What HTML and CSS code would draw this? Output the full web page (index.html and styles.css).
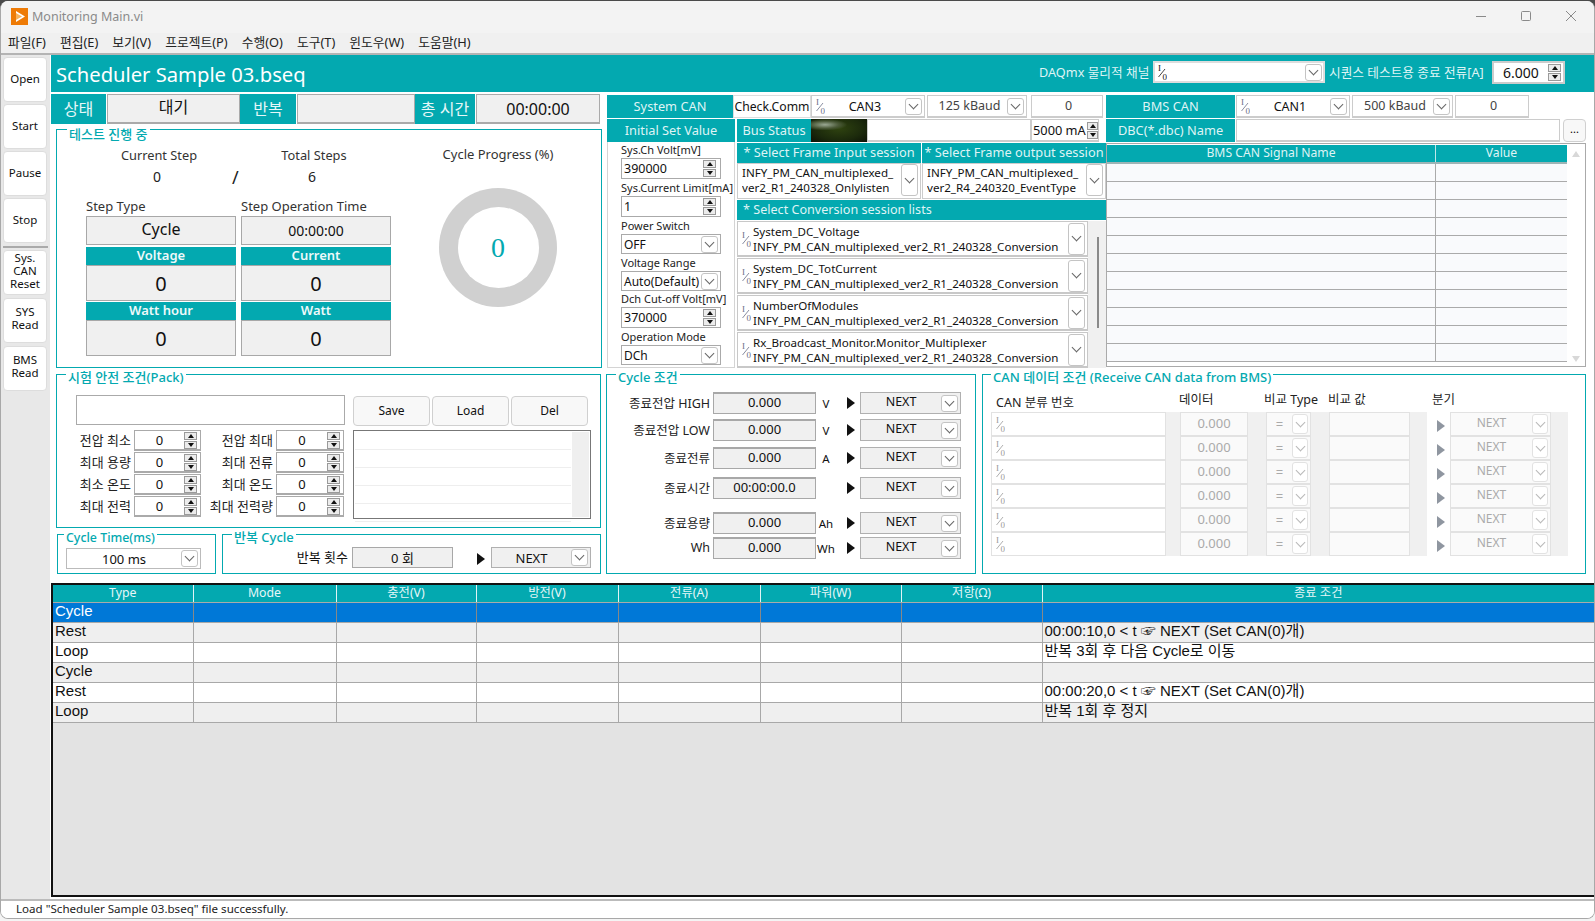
FILE: index.html
```html
<!DOCTYPE html>
<html lang="ko">
<head>
<meta charset="utf-8">
<title>Monitoring Main.vi</title>
<link rel="stylesheet" href="styles.css">
</head>
<body>
<svg class="defs" width="0" height="0" aria-hidden="true">
  <symbol id="io" viewBox="0 0 9 16">
    <text x="0" y="7" class="io-t">I</text>
    <line x1="0.5" y1="13" x2="7" y2="5" stroke="currentColor" stroke-width="0.8"/>
    <text x="4.5" y="15.5" class="io-t">0</text>
  </symbol>
</svg>
<div class="window">
  <div class="titlebar">
    <svg class="appicon" width="17" height="17" viewBox="0 0 17 17"><rect width="17" height="17" fill="#ee7b06"/><path d="M5 3 L14 8.5 L5 14 Z" fill="#fff"/><path d="M5 5 L11 8.5 L5 12 Z" fill="#f7b35e"/></svg>
    <span class="apptitle">Monitoring Main.vi</span>
    <div class="winbtns">
      <svg width="10" height="10" viewBox="0 0 10 10"><line x1="0" y1="5.5" x2="10" y2="5.5" stroke="#8a8a8a"/></svg>
      <svg width="10" height="10" viewBox="0 0 10 10"><rect x="0.5" y="0.5" width="9" height="9" rx="1" fill="none" stroke="#8a8a8a"/></svg>
      <svg width="10" height="10" viewBox="0 0 10 10"><path d="M0 0 L10 10 M10 0 L0 10" stroke="#8a8a8a"/></svg>
    </div>
  </div>
  <div class="menubar">
    <span>파일(F)</span><span>편집(E)</span><span>보기(V)</span><span>프로젝트(P)</span><span>수행(O)</span><span>도구(T)</span><span>윈도우(W)</span><span>도움말(H)</span>
  </div>
  <div class="main">
    <div class="toolbar">
      <div class="tgroup">
        <button class="tbtn">Open</button>
        <button class="tbtn">Start</button>
        <button class="tbtn">Pause</button>
        <button class="tbtn">Stop</button>
      </div>
      <div class="tsep"></div>
      <div class="tgroup tgroup2">
        <button class="tbtn tsmall">Sys.<br>CAN<br>Reset</button>
        <button class="tbtn tsmall">SYS<br>Read</button>
        <button class="tbtn tsmall">BMS<br>Read</button>
      </div>
    </div>
    <div class="content">
      <div class="header">
        <div class="apptext">Scheduler Sample 03.bseq</div>
        <div class="hlabel daqlabel">DAQmx 물리적 채널</div>
        <div class="ctl daq"><svg class="io dark"><use href="#io"/></svg><span class="grow"></span><span class="cb"></span></div>
        <div class="hlabel seqlabel">시퀀스 테스트용 종료 전류[A]</div>
        <div class="ctl seqval"><span class="grow center">6.000</span><span class="spin"><i></i><i></i></span></div>
      </div>
      <div class="upper">
        <div class="left">
          <div class="statusrow">
            <div class="slabel w55">상태</div>
            <div class="sfield w133 raised">대기</div>
            <div class="slabel w56">반복</div>
            <div class="sfield w118"></div>
            <div class="slabel w60">총 시간</div>
            <div class="sfield w124">00:00:00</div>
          </div>
          <div class="panel p-test">
            <span class="legend">테스트 진행 중</span>
            <div class="steps">
              <div class="triple t-head"><span>Current Step</span><span></span><span>Total Steps</span></div>
              <div class="triple t-val"><span>0</span><span class="slash">/</span><span>6</span></div>
              <div class="triple t-sub"><span>Step Type</span><span></span><span>Step Operation Time</span></div>
              <div class="triple t-box"><div class="vbox big">Cycle</div><span></span><div class="vbox">00:00:00</div></div>
              <div class="triple t-hdr"><div class="tealh">Voltage</div><span></span><div class="tealh">Current</div></div>
              <div class="triple t-num"><div class="vbox num">0</div><span></span><div class="vbox num">0</div></div>
              <div class="triple t-hdr"><div class="tealh">Watt hour</div><span></span><div class="tealh">Watt</div></div>
              <div class="triple t-num"><div class="vbox num">0</div><span></span><div class="vbox num">0</div></div>
            </div>
            <div class="progress">
              <div class="ptitle">Cycle Progress (%)</div>
              <div class="ring"><div class="ring-in">0</div></div>
            </div>
          </div>
          <div class="panel p-safe">
            <span class="legend">시험 안전 조건(Pack)</span>
            <div class="safegrid">
              <div class="nameinput"></div>
              <div class="safebtns"><button class="sbtn">Save</button><button class="sbtn">Load</button><button class="sbtn">Del</button></div>
              <div class="limits">
                <label>전압 최소</label><div class="ctl lim"><span class="grow center">0</span><span class="spin"><i></i><i></i></span></div>
                <label>전압 최대</label><div class="ctl lim"><span class="grow center">0</span><span class="spin"><i></i><i></i></span></div>
                <label>최대 용량</label><div class="ctl lim"><span class="grow center">0</span><span class="spin"><i></i><i></i></span></div>
                <label>최대 전류</label><div class="ctl lim"><span class="grow center">0</span><span class="spin"><i></i><i></i></span></div>
                <label>최소 온도</label><div class="ctl lim"><span class="grow center">0</span><span class="spin"><i></i><i></i></span></div>
                <label>최대 온도</label><div class="ctl lim"><span class="grow center">0</span><span class="spin"><i></i><i></i></span></div>
                <label>최대 전력</label><div class="ctl lim"><span class="grow center">0</span><span class="spin"><i></i><i></i></span></div>
                <label>최대 전력량</label><div class="ctl lim"><span class="grow center">0</span><span class="spin"><i></i><i></i></span></div>
              </div>
              <div class="listbox"><div class="listrows"><div></div><div></div><div></div><div></div><div></div></div><div class="listscroll"></div></div>
            </div>
          </div>
          <div class="bottomrow">
            <div class="panel p-time">
              <span class="legend">Cycle Time(ms)</span>
              <div class="ctl timesel"><span class="grow center">100 ms</span><span class="cb"></span></div>
            </div>
            <div class="panel p-rep">
              <span class="legend">반복 Cycle</span>
              <div class="replabel">반복 횟수</div>
              <div class="vbox repbox">0 회</div>
              <span class="play repplay"></span>
              <div class="ctl gray repnext"><span class="grow center">NEXT</span><span class="cb"></span></div>
            </div>
          </div>
        </div>
        <div class="right">
          <div class="cantop">
            <div class="cana">
              <div class="crow">
                <div class="tlabel w126">System CAN</div>
                <div class="plain w78">Check.Comm</div>
                <div class="ctl w114 thin"><svg class="io"><use href="#io"/></svg><span class="grow center">CAN3</span><span class="cb"></span></div>
                <div class="ctl w100 thin ml2"><span class="grow center soft">125 kBaud</span><span class="cb"></span></div>
                <div class="ctl w72 thin ml4"><span class="grow center soft">0</span></div>
              </div>
              <div class="crow mt1">
                <div class="tlabel w128">Initial Set Value</div>
                <div class="tlabel w74 ml2">Bus Status</div>
                <div class="led"></div>
                <div class="ctl w164 thin"></div>
                <div class="ctl w68 thin tight-ma"><span class="grow ma">5000 mA</span><span class="spin"><i></i><i></i></span></div>
              </div>
              <div class="canlow">
                <div class="settings">
                  <label class="slab">Sys.Ch Volt[mV]</label>
                  <div class="ctl sset"><span class="grow pl">390000</span><span class="spin"><i></i><i></i></span></div>
                  <label class="slab">Sys.Current Limit[mA]</label>
                  <div class="ctl sset"><span class="grow pl">1</span><span class="spin"><i></i><i></i></span></div>
                  <label class="slab">Power Switch</label>
                  <div class="ctl ssel"><span class="grow pl">OFF</span><span class="cb"></span></div>
                  <label class="slab">Voltage Range</label>
                  <div class="ctl ssel"><span class="grow pl">Auto(Default)</span><span class="cb"></span></div>
                  <label class="slab tight">Dch Cut-off Volt[mV]</label>
                  <div class="ctl sset"><span class="grow pl">370000</span><span class="spin"><i></i><i></i></span></div>
                  <label class="slab">Operation Mode</label>
                  <div class="ctl ssel"><span class="grow pl">DCh</span><span class="cb"></span></div>
                </div>
                <div class="sessions">
                  <div class="sessheads"><div class="tlabel">* Select Frame Input session</div><div class="tlabel">* Select Frame output session</div></div>
                  <div class="sessrow">
                    <div class="ctl sess"><span class="grow two">INFY_PM_CAN_multiplexed_<br>ver2_R1_240328_Onlylisten</span><span class="cb tall"></span></div>
                    <div class="ctl sess"><span class="grow two">INFY_PM_CAN_multiplexed_<br>ver2_R4_240320_EventType</span><span class="cb tall"></span></div>
                  </div>
                  <div class="tlabel convhead">* Select Conversion session lists</div>
                  <div class="convwrap">
                    <div class="convlist">
                      <div class="ctl conv"><svg class="io"><use href="#io"/></svg><span class="grow two">System_DC_Voltage<br>INFY_PM_CAN_multiplexed_ver2_R1_240328_Conversion</span><span class="cb tall"></span></div>
                      <div class="ctl conv"><svg class="io"><use href="#io"/></svg><span class="grow two">System_DC_TotCurrent<br>INFY_PM_CAN_multiplexed_ver2_R1_240328_Conversion</span><span class="cb tall"></span></div>
                      <div class="ctl conv"><svg class="io"><use href="#io"/></svg><span class="grow two">NumberOfModules<br>INFY_PM_CAN_multiplexed_ver2_R1_240328_Conversion</span><span class="cb tall"></span></div>
                      <div class="ctl conv"><svg class="io"><use href="#io"/></svg><span class="grow two">Rx_Broadcast_Monitor.Monitor_Multiplexer<br>INFY_PM_CAN_multiplexed_ver2_R1_240328_Conversion</span><span class="cb tall"></span></div>
                    </div>
                    <div class="convscroll"><i></i></div>
                  </div>
                </div>
              </div>
            </div>
            <div class="canb">
              <div class="crow">
                <div class="tlabel w129">BMS CAN</div>
                <div class="ctl w114 thin ml1"><svg class="io"><use href="#io"/></svg><span class="grow center">CAN1</span><span class="cb"></span></div>
                <div class="ctl w101 thin ml2"><span class="grow center soft">500 kBaud</span><span class="cb"></span></div>
                <div class="ctl w74 thin ml2"><span class="grow center soft">0</span></div>
              </div>
              <div class="crow mt1">
                <div class="tlabel w129">DBC(*.dbc) Name</div>
                <div class="ctl w324 thin ml1"></div>
                <button class="dots">...</button>
              </div>
              <div class="signals">
                <div class="sigtable">
                  <div class="sighead"><div>BMS CAN Signal Name</div><div>Value</div></div>
                  <div class="sigrow"><i></i><i></i></div><div class="sigrow"><i></i><i></i></div><div class="sigrow"><i></i><i></i></div>
                  <div class="sigrow"><i></i><i></i></div><div class="sigrow"><i></i><i></i></div><div class="sigrow"><i></i><i></i></div>
                  <div class="sigrow"><i></i><i></i></div><div class="sigrow"><i></i><i></i></div><div class="sigrow"><i></i><i></i></div>
                  <div class="sigrow"><i></i><i></i></div><div class="sigrow"><i></i><i></i></div>
                </div>
                <div class="sigscroll"><span class="tri-up"></span><span class="tri-down"></span></div>
              </div>
            </div>
          </div>
          <div class="lower">
            <div class="panel p-cycle">
              <span class="legend">Cycle 조건</span>
              <div class="cyrow"><label>종료전압 HIGH</label><div class="vbox cyf">0.000</div><span class="unit">V</span><span class="play"></span><div class="ctl gray cyn"><span class="grow center">NEXT</span><span class="cb"></span></div></div>
              <div class="cyrow"><label>종료전압 LOW</label><div class="vbox cyf">0.000</div><span class="unit">V</span><span class="play"></span><div class="ctl gray cyn"><span class="grow center">NEXT</span><span class="cb"></span></div></div>
              <div class="cyrow"><label>종료전류</label><div class="vbox cyf">0.000</div><span class="unit">A</span><span class="play"></span><div class="ctl gray cyn"><span class="grow center">NEXT</span><span class="cb"></span></div></div>
              <div class="cyrow"><label>종료시간</label><div class="vbox cyf">00:00:00.0</div><span class="unit"></span><span class="play"></span><div class="ctl gray cyn"><span class="grow center">NEXT</span><span class="cb"></span></div></div>
              <div class="cyrow"><label>종료용량</label><div class="vbox cyf">0.000</div><span class="unit">Ah</span><span class="play"></span><div class="ctl gray cyn"><span class="grow center">NEXT</span><span class="cb"></span></div></div>
              <div class="cyrow"><label>Wh</label><div class="vbox cyf">0.000</div><span class="unit">Wh</span><span class="play"></span><div class="ctl gray cyn"><span class="grow center">NEXT</span><span class="cb"></span></div></div>
            </div>
            <div class="panel p-can">
              <span class="legend">CAN 데이터 조건 (Receive CAN data from BMS)</span>
              <div class="canhead"><span class="h1">CAN 분류 번호</span><span class="h2">데이터</span><span class="h3">비교 Type</span><span class="h4">비교 값</span><span class="h5">분기</span></div>
              <div class="canrows">
                <div class="canrow"><div class="c1"><svg class="io dis"><use href="#io"/></svg></div><div class="c2">0.000</div><div class="c3"><span class="grow center">=</span><span class="cb dis"></span></div><div class="c4"></div><div class="c5"><span class="play dis"></span></div><div class="c6"><span class="grow center">NEXT</span><span class="cb dis"></span></div></div>
                <div class="canrow"><div class="c1"><svg class="io dis"><use href="#io"/></svg></div><div class="c2">0.000</div><div class="c3"><span class="grow center">=</span><span class="cb dis"></span></div><div class="c4"></div><div class="c5"><span class="play dis"></span></div><div class="c6"><span class="grow center">NEXT</span><span class="cb dis"></span></div></div>
                <div class="canrow"><div class="c1"><svg class="io dis"><use href="#io"/></svg></div><div class="c2">0.000</div><div class="c3"><span class="grow center">=</span><span class="cb dis"></span></div><div class="c4"></div><div class="c5"><span class="play dis"></span></div><div class="c6"><span class="grow center">NEXT</span><span class="cb dis"></span></div></div>
                <div class="canrow"><div class="c1"><svg class="io dis"><use href="#io"/></svg></div><div class="c2">0.000</div><div class="c3"><span class="grow center">=</span><span class="cb dis"></span></div><div class="c4"></div><div class="c5"><span class="play dis"></span></div><div class="c6"><span class="grow center">NEXT</span><span class="cb dis"></span></div></div>
                <div class="canrow"><div class="c1"><svg class="io dis"><use href="#io"/></svg></div><div class="c2">0.000</div><div class="c3"><span class="grow center">=</span><span class="cb dis"></span></div><div class="c4"></div><div class="c5"><span class="play dis"></span></div><div class="c6"><span class="grow center">NEXT</span><span class="cb dis"></span></div></div>
                <div class="canrow"><div class="c1"><svg class="io dis"><use href="#io"/></svg></div><div class="c2">0.000</div><div class="c3"><span class="grow center">=</span><span class="cb dis"></span></div><div class="c4"></div><div class="c5"><span class="play dis"></span></div><div class="c6"><span class="grow center">NEXT</span><span class="cb dis"></span></div></div>
              </div>
            </div>
          </div>
        </div>
      </div>
      <div class="seqtable">
        <table>
          <colgroup><col class="k1"><col class="k2"><col class="k3"><col class="k4"><col class="k5"><col class="k6"><col class="k7"><col></colgroup>
          <thead><tr><th>Type</th><th>Mode</th><th>충전(V)</th><th>방전(V)</th><th>전류(A)</th><th>파워(W)</th><th>저항(Ω)</th><th>종료 조건</th></tr></thead>
          <tbody>
            <tr class="sel"><td>Cycle</td><td></td><td></td><td></td><td></td><td></td><td></td><td></td></tr>
            <tr class="alt"><td>Rest</td><td></td><td></td><td></td><td></td><td></td><td></td><td>00:00:10,0 &lt; t ☞ NEXT (Set CAN(0)개)</td></tr>
            <tr><td>Loop</td><td></td><td></td><td></td><td></td><td></td><td></td><td>반복 3회 후 다음 Cycle로 이동</td></tr>
            <tr class="alt"><td>Cycle</td><td></td><td></td><td></td><td></td><td></td><td></td><td></td></tr>
            <tr><td>Rest</td><td></td><td></td><td></td><td></td><td></td><td></td><td>00:00:20,0 &lt; t ☞ NEXT (Set CAN(0)개)</td></tr>
            <tr class="alt"><td>Loop</td><td></td><td></td><td></td><td></td><td></td><td></td><td>반복 1회 후 정지</td></tr>
          </tbody>
        </table>
      </div>
    </div>
  </div>
  <div class="statusbar">Load "Scheduler Sample 03.bseq" file successfully.</div>
</div>
</body>
</html>
```
FILE: styles.css
```css
* { box-sizing: border-box; }
html, body { margin: 0; padding: 0; height: 921px; overflow: hidden; }
body { background: linear-gradient(#4a4a4a 0 14px, #f4f4f4 14px); font-family: "Noto Sans", "Noto Sans CJK KR", sans-serif; font-size: 13px; color: #111; }
.defs { position: absolute; }
.window { width: 1595px; height: 918px; margin-top: 1px; display: flex; flex-direction: column; background: #fff; border-radius: 8px; overflow: hidden; border: solid #a8a8a8; border-width: 0 1px 1px 1px; }
.titlebar { height: 32px; flex: none; background: #f3f3f3; display: flex; align-items: center; padding: 0 0 2px 10px; }
.apptitle { margin-left: 4px; color: #8a8a8a; font-size: 12.5px; }
.winbtns { margin-left: auto; display: flex; gap: 35px; margin-right: 18px; }
.menubar { height: 22px; flex: none; background: #f0f0f0; border-bottom: 2px solid #b4b4b4; display: flex; gap: 14px; padding-left: 7px; font-size: 12.8px; line-height: 19px; color: #222; }
.main { flex: 1; min-height: 0; display: flex; background: #fff; }
.toolbar { width: 49px; flex: none; background: #e8e8e8; padding: 2px 2px 0; display: flex; flex-direction: column; }
.tgroup { display: flex; flex-direction: column; gap: 2px; }
.tgroup2 { gap: 3px; }
.tsep { height: 2px; background: #aaa; margin: 3px 0 2px; }
.tbtn { height: 45px; width: 44px; padding: 0 0 2px; font: inherit; font-size: 11.5px; color: #111; background: #fff; border: 1px solid #ddd; border-radius: 4px; line-height: 13px; }
.tsmall { padding-bottom: 5px; }
.content { width: 1545px; padding-left: 1px; display: flex; flex-direction: column; flex: none; }
.header { height: 37px; flex: none; background: #03a9b0; display: flex; align-items: center; color: #fff; }
.apptext { font-size: 20.2px; margin-left: 5px; width: 983px; white-space: nowrap; }
.hlabel { color: #dff4f5; font-size: 12.7px; white-space: nowrap; margin-bottom: 4px; }
.daqlabel { width: 114px; }
.seqlabel { width: 162px; margin-left: 4px; }
.ctl { display: flex; align-items: center; background: #fff; border: 2px solid #b0b0b0; flex: none; white-space: nowrap; color: #111; }
.grow { flex: 1; min-width: 0; }
.center { text-align: center; }
.raised { padding-bottom: 5px; }
.soft { color: #444; font-size: 12px; padding-bottom: 2px; }
.daq { width: 172px; height: 22px; border-color: #ddd; padding-left: 3px; margin-bottom: 3px; }
.seqval { width: 73px; height: 23px; border-color: #ccc; font-size: 14px; padding-right: 2px; margin: 0 0 3px 1px; }
.io { width: 9px; height: 16px; flex: none; color: #6a7088; }
.io.dark { color: #111; }
.io.dis { color: #999; }
.io-t { font-family: "Liberation Serif", serif; font-size: 9px; fill: currentColor; }
.cb { width: 17px; height: 17px; flex: none; background: #fff; border: 1px solid #c4c4c4; border-radius: 3px; margin-right: 1px; display: flex; align-items: center; justify-content: center; }
.cb::before { content: ""; width: 6px; height: 6px; border-right: 1px solid #666; border-bottom: 1px solid #666; transform: translateY(-2px) rotate(45deg); }
.cb.tall { height: 32px; }
.cb.dis { width: 16px; height: 20px; border-color: #e2e2e2; }
.cb.dis::before { border-color: #b8b8b8; }
.spin { width: 13px; flex: none; display: flex; flex-direction: column; gap: 1px; }
.spin i { height: 8px; background: #ececec; border: 1px solid #9a9a9a; display: flex; align-items: center; justify-content: center; }
.spin i:first-child::before { content: ""; border-left: 3px solid transparent; border-right: 3px solid transparent; border-bottom: 4px solid #111; }
.spin i:last-child::before { content: ""; border-left: 3px solid transparent; border-right: 3px solid transparent; border-top: 4px solid #111; }
.upper { height: 484px; flex: none; margin-top: 2px; display: flex; }
.left { width: 551px; flex: none; display: flex; flex-direction: column; }
.statusrow { height: 30px; flex: none; display: flex; }
.slabel { background: #03a9b0; color: #e6f7f8; font-size: 16px; display: flex; align-items: center; justify-content: center; flex: none; padding-bottom: 2px; }
.sfield { background: #f0f0f0; border: 1px solid #aaa; border-width: 1px 1px 2px 1px; font-size: 16px; display: flex; align-items: center; justify-content: center; flex: none; margin-left: 1px; }
.w55 { width: 55px; } .w56 { width: 56px; } .w60 { width: 60px; } .w133 { width: 133px; } .w118 { width: 118px; } .w124 { width: 124px; }
.panel { position: relative; border: 1px solid #03a9b0; background: #fff; flex: none; }
.legend { position: absolute; top: -6px; left: 9px; background: linear-gradient(#fff 0 8px, transparent 8px); color: #03a9b0; font-size: 13px; line-height: 17px; padding: 0 2px; font-weight: 500; white-space: nowrap; }
.p-test .legend { top: -4px; left: 10px; }
.p-time .legend { left: 6px; font-size: 12.4px; }
.p-can .legend { left: 8px; }
.steps { margin: 16px 0 0 29px; width: 305px; flex: none; font-size: 13px; }
.p-test { height: 239px; width: 546px; margin: 5px 0 0 5px; display: flex; }
.triple { display: grid; grid-template-columns: 150px 5px 150px; }
.t-head { height: 19px; line-height: 19px; text-align: center; color: #333; margin-left: -2px; font-size: 12.8px; }
.t-val { height: 24px; line-height: 24px; text-align: center; margin-left: -4px; font-size: 14px; color: #222; }
.slash { font-size: 18px; }
.t-sub { height: 19px; line-height: 19px; margin-top: 8px; color: #333; }
.t-box { height: 29px; }
.t-hdr { height: 18px; margin-top: 2px; }
.t-num { height: 36px; }
.t-hdr ~ .t-hdr { margin-top: 1px; }
.vbox { background: #f0f0f0; border: 1px solid #a8a8a8; display: flex; align-items: center; justify-content: center; }
.t-box .vbox { font-size: 14px; }
.t-box .vbox.big { font-size: 16px; padding-bottom: 3px; }
.num { font-size: 20px; }
.tealh { background: #03a9b0; color: #eef9fa; text-align: center; font-size: 13px; line-height: 17px; font-weight: 600; }
.progress { margin-left: 4px; width: 210px; display: flex; flex-direction: column; align-items: center; }
.ptitle { height: 19px; line-height: 19px; margin-top: 15px; color: #333; }
.ring { width: 118px; height: 119px; margin-top: 24px; border-radius: 50%; background: #d0d0d0; display: flex; align-items: center; justify-content: center; }
.ring-in { width: 81px; height: 81px; border-radius: 50%; background: #fff; color: #03a9b0; font-size: 28px; display: flex; align-items: center; justify-content: center; font-family: "Liberation Serif", serif; }
.p-safe { height: 154px; width: 545px; margin: 6px 0 0 5px; }
.safegrid { display: grid; grid-template-columns: 269px 238px; column-gap: 8px; grid-template-rows: 30px 89px; row-gap: 5px; padding: 20px 0 0 19px; }
.nameinput { border: 1px solid #aaa; background: #fff; }
.safebtns { display: flex; gap: 2px; margin-top: 1px; }
.sbtn { width: 77px; height: 30px; padding: 0 0 2px; font: inherit; font-size: 12px; background: #f8f8f8; border: 1px solid #d0d0d0; border-radius: 4px; color: #111; }
.limits { display: grid; grid-template-columns: 58px 67px 75px 68px; grid-auto-rows: 21px; row-gap: 1px; }
.limits label { text-align: right; padding-right: 3px; white-space: nowrap; line-height: 20px; font-size: 13px; color: #222; }
.lim { height: 21px; border-width: 1px; border-color: #aaa; border-bottom-width: 2px; padding-right: 3px; font-size: 13px; }
.listbox { border: 1px solid #777; display: flex; padding: 1px; }
.listrows { flex: 1; }
.listrows div { height: 18px; border-bottom: 1px solid #eee; }
.listscroll { width: 17px; background: #efefef; margin-left: 1px; }
.bottomrow { display: flex; margin: 6px 0 0 6px; gap: 6px; height: 40px; }
.p-time { width: 159px; height: 40px; padding: 13px 0 0 8px; }
.timesel { width: 135px; height: 21px; border-width: 1px; border-color: #bbb; padding-right: 1px; }
.p-rep { width: 379px; height: 40px; display: flex; align-items: flex-start; padding-top: 12px; }
.replabel { margin-left: 70px; width: 55px; text-align: right; line-height: 21px; font-size: 13px; white-space: nowrap; }
.repbox { width: 101px; height: 21px; margin-left: 4px; }
.play { width: 0; height: 0; border-left: 8px solid #111; border-top: 6px solid transparent; border-bottom: 6px solid transparent; flex: none; display: block; }
.play.dis { border-left-color: #8f96a0; }
.repplay { margin: 6px 0 0 24px; }
.repnext { width: 100px; height: 21px; margin-left: 6px; border-color: #b0b0b0; border-width: 1px; padding-right: 1px; }
.gray { background: #f0f0f0; }
.right { margin-left: 4px; width: 989px; flex: none; display: flex; flex-direction: column; }
.cantop { display: flex; height: 273px; margin: 1px 0 0 1px; flex: none; }
.cana { width: 499px; flex: none; }
.canb { width: 480px; flex: none; }
.crow { height: 23px; display: flex; }
.mt1 { margin-top: 1px; }
.ml1 { margin-left: 1px; } .ml2 { margin-left: 2px; } .ml4 { margin-left: 4px; }
.tlabel { background: #03a9b0; color: #dff4f5; display: flex; align-items: center; justify-content: center; flex: none; font-size: 12.8px; white-space: nowrap; padding-bottom: 2px; }
.plain { display: flex; align-items: center; justify-content: center; font-size: 12.2px; flex: none; border: 1px solid #ddd; }
.w126 { width: 126px; } .w78 { width: 78px; } .w114 { width: 114px; } .w100 { width: 100px; } .w72 { width: 72px; } .w128 { width: 128px; } .w74 { width: 74px; } .w164 { width: 164px; } .w68 { width: 68px; } .w129 { width: 129px; } .w101 { width: 101px; } .w324 { width: 324px; }
.thin { border-width: 1px; border-color: #ccc; border-bottom-width: 2px; padding-left: 4px; padding-right: 1px; height: 23px; }
.thin .grow.center { font-size: 12.5px; }
.led { width: 56px; height: 23px; flex: none; background: radial-gradient(ellipse 40% 25% at 25% 25%, #9aa893 0%, #4c5b3a 60%, transparent 100%), radial-gradient(ellipse at 50% 40%, #2f4310 0%, #1c2a0c 60%, #0c1206 100%); }
.tight-ma { padding-left: 1px; padding-right: 0; }
.tight-ma .spin { width: 11px; }
.ma { font-size: 12.8px; }
.canlow { display: flex; gap: 2px; }
.settings { width: 128px; height: 226px; flex: none; border: 1px solid #d4d4d4; border-top: 0; padding-left: 13px; display: flex; flex-direction: column; }
.slab { height: 16px; line-height: 16px; font-size: 11px; margin-top: 1px; white-space: nowrap; color: #222; }
.slab:first-child { margin-top: 0; }
.slab.tight { margin-top: 0; }
.sset { width: 100px; height: 21px; border-width: 1px; border-color: #aaa; padding-right: 4px; flex: none; }
.ssel { width: 100px; height: 20px; border-width: 1px; border-color: #aaa; padding-right: 1px; flex: none; }
.pl { padding-left: 2px; font-size: 12.5px; }
.ssel .pl { font-size: 12px; }
.sessions { width: 369px; flex: none; margin-top: 1px; }
.sessheads { display: grid; grid-template-columns: 184px 184px; gap: 1px; height: 19px; }
.sessrow { display: grid; grid-template-columns: 184px 184px; gap: 1px; margin-top: 1px; }
.sess { height: 36px; border-width: 1px; border-color: #ccc; padding: 0 1px 2px 4px; }
.two { font-size: 11.6px; line-height: 15px; white-space: nowrap; overflow: hidden; }
.convhead { height: 20px; justify-content: flex-start; padding-left: 6px; margin-top: 1px; font-size: 12.6px; }
.convwrap { display: flex; margin-top: 1px; }
.convlist { width: 351px; flex: none; display: flex; flex-direction: column; gap: 1px; }
.conv { height: 36px; border-width: 1px; border-color: #c8c8c8; border-bottom-width: 2px; padding: 0 1px 0 4px; gap: 2px; }
.convscroll { flex: 1; height: 147px; background: #f0f0f0; padding: 16px 0 0 9px; }
.convscroll i { display: block; width: 2px; height: 91px; background: #8a8a8a; }
.dots { width: 23px; height: 23px; margin-left: 3px; padding: 0 0 4px; background: #f8f8f8; border: 1px solid #d0d0d0; border-radius: 4px; font: inherit; font-size: 11px; line-height: 14px; }
.signals { display: flex; margin-top: 1px; height: 224px; border: 1px solid #aaa; padding: 1px 0 0 0; overflow: hidden; }
.sigtable { width: 460px; flex: none; }
.sighead { display: grid; grid-template-columns: 328px 132px; height: 19px; background: #03a9b0; color: #dff4f5; text-align: center; font-size: 12.2px; line-height: 16px; border-bottom: 2px solid #9db4b6; }
.sighead div + div { border-left: 1px solid #bfe7e9; }
.sigrow { display: grid; grid-template-columns: 328px 132px; height: 18px; background: #f9fafc; border-bottom: 1px solid #aaa; }
.sigrow i + i { border-left: 1px solid #aaa; }
.sigscroll { flex: 1; display: flex; flex-direction: column; justify-content: space-between; align-items: center; padding: 6px 0 4px; }
.tri-up { width: 0; height: 0; border-left: 4px solid transparent; border-right: 4px solid transparent; border-bottom: 6px solid #d8d8d8; }
.tri-down { width: 0; height: 0; border-left: 4px solid transparent; border-right: 4px solid transparent; border-top: 6px solid #d8d8d8; }
.lower { display: flex; margin-top: 6px; gap: 6px; }
.p-cycle { width: 370px; height: 200px; padding-top: 17px; }
.cyrow { display: flex; align-items: center; height: 22px; }
.cyrow:nth-of-type(2) { margin-top: 5px; }
.cyrow:nth-of-type(3) { margin-top: 6px; }
.cyrow:nth-of-type(4) { margin-top: 8px; }
.cyrow:nth-of-type(5) { margin-top: 13px; }
.cyrow:nth-of-type(6) { margin-top: 3px; }
.cyrow label { width: 103px; text-align: right; font-size: 12.5px; white-space: nowrap; color: #222; padding-bottom: 2px; }
.cyf { width: 103px; height: 22px; margin-left: 3px; border-width: 2px 1px 1px; font-size: 13px; padding-bottom: 3px; }
.unit { width: 20px; font-size: 11.5px; text-align: center; margin-right: 11px; flex: none; }
.cyrow .play { margin-right: 5px; }
.cyn { width: 101px; height: 22px; border-width: 1px; border-color: #b0b0b0; padding-right: 1px; font-size: 12.5px; }
.cyn .grow { padding-bottom: 3px; }
.p-can { width: 604px; height: 200px; padding-left: 8px; }
.canhead { position: relative; height: 37px; font-size: 12.5px; color: #222; }
.canhead span { position: absolute; white-space: nowrap; top: 14px; }
.canhead .h1 { left: 5px; top: 17px; }
.h2 { left: 188px; } .h3 { left: 273px; } .h4 { left: 337px; } .h5 { left: 441px; }
.canrows { width: 577px; background: #f0f0f0; display: flex; flex-direction: column; }
.canrow { height: 24px; display: flex; font-size: 13px; color: #aaa; }
.canrow > div { height: 24px; border: 1px solid #e2e2e2; background: #fafafa; flex: none; display: flex; align-items: center; }
.canrow > .c1 { width: 175px; background: #fff; padding-left: 4px; }
.c2 { width: 68px; margin-left: 14px; justify-content: center; padding-bottom: 2px; }
.c3 { width: 45px; margin-left: 18px; padding-right: 1px; }
.c4 { width: 81px; margin-left: 18px; }
.canrow > .c5 { margin-left: 17px; width: 23px; background: #fff; border: 0; padding: 3px 0 0 10px; }
.c6 { width: 101px; padding-right: 1px; font-size: 12px; }
.c6 .grow { padding-bottom: 3px; }
.seqtable { width: 1544px; height: 314px; margin-top: 5px; flex: none; border: 2px solid #111; border-right-width: 1px; background: #e3e3e3; }
.seqtable table { width: 1541px; border-collapse: collapse; table-layout: fixed; font-family: "Liberation Sans", "Noto Sans CJK KR", sans-serif; }
.k1 { width: 140px; } .k2 { width: 143px; } .k3 { width: 140px; } .k4 { width: 142px; } .k5 { width: 142px; } .k6 { width: 141px; } .k7 { width: 141px; }
.seqtable th { height: 17px; padding: 0 0 1px; background: #03a9b0; color: #e6f7f8; font-size: 12.3px; line-height: 15px; font-weight: 400; border-left: 1px solid #e0f4f5; border-bottom: 1px solid #aaa; font-family: "Noto Sans", "Noto Sans CJK KR", sans-serif; }
.seqtable th:first-child { border-left: 0; }
.seqtable td { height: 20px; padding: 0 0 3px 2px; font-size: 15px; border-left: 1px solid #a8a8a8; border-bottom: 1px solid #a8a8a8; background: #fff; white-space: nowrap; overflow: hidden; line-height: 16px; color: #111; }
.seqtable td:first-child { border-left: 0; }
.seqtable .alt td { background: #efefef; }
.seqtable .sel td { background: #0078d7; color: #fff; border-left-color: #888; }
.statusbar { height: 19px; flex: none; border-top: 2px solid #bbb; background: #fff; padding-left: 15px; font-size: 11.6px; line-height: 15px; color: #222; }
```
